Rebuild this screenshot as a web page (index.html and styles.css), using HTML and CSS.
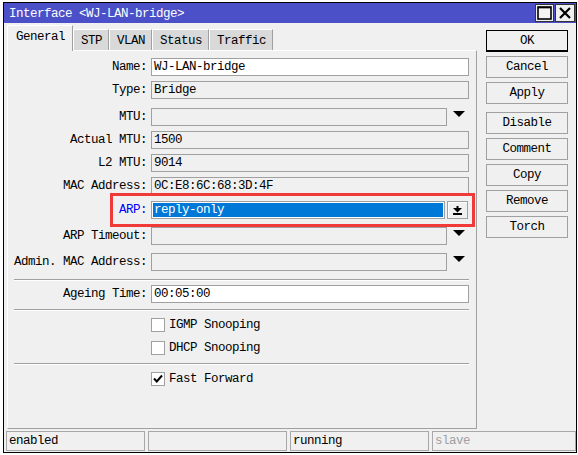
FILE: index.html
```html
<!DOCTYPE html>
<html>
<head>
<meta charset="utf-8">
<link rel="stylesheet" href="styles.css">
</head>
<body>
<div class="win">
  <div class="titlebar">
    <span class="title">Interface &lt;WJ-LAN-bridge&gt;</span>
    <div class="tbtns">
      <span class="tbtn max"><svg width="15" height="14" viewBox="0 0 15 14"><rect x="1" y="1" width="13" height="12" fill="#f4f4f4" stroke="#000" stroke-width="1.6"/><line x1="1" y1="1.6" x2="14" y2="1.6" stroke="#000" stroke-width="1.5"/></svg></span>
      <span class="tbtn close"><svg width="14" height="14" viewBox="0 0 14 14"><path d="M2 2 L12 12 M12 2 L2 12" stroke="#000" stroke-width="2.2" fill="none"/></svg></span>
    </div>
  </div>
  <div class="main">
    <div class="left">
      <div class="tabs">
        <div class="tab sel">General</div>
        <div class="tab">STP</div>
        <div class="tab">VLAN</div>
        <div class="tab">Status</div>
        <div class="tab">Traffic</div>
      </div>
      <div class="panel">
        <div class="row"><div class="lbl">Name:</div><div class="fld edit">WJ-LAN-bridge</div></div>
        <div class="row m5"><div class="lbl">Type:</div><div class="fld">Bridge</div></div>
        <div class="row m9"><div class="lbl">MTU:</div><div class="fld dd"></div><span class="arrow"><svg width="12" height="6" viewBox="0 0 12 6"><polygon points="0,0 12,0 6,6" fill="#000"/></svg></span></div>
        <div class="row m5"><div class="lbl">Actual MTU:</div><div class="fld">1500</div></div>
        <div class="row m5"><div class="lbl">L2 MTU:</div><div class="fld">9014</div></div>
        <div class="row m5"><div class="lbl">MAC Address:</div><div class="fld">0C:E8:6C:68:3D:4F</div></div>
        <div class="row m6"><div class="lbl blue">ARP:</div><div class="fld dd sel-fld"><span class="selval">reply-only</span></div><span class="ddbtn"><svg width="9" height="9" viewBox="0 0 9 9"><rect x="3.5" y="0" width="2" height="2" fill="#000"/><polygon points="0,2 9,2 4.5,6.5" fill="#000"/><rect x="0" y="7" width="9" height="2" fill="#000"/></svg></span></div>
        <div class="row m8"><div class="lbl">ARP Timeout:</div><div class="fld dd"></div><span class="arrow"><svg width="12" height="6" viewBox="0 0 12 6"><polygon points="0,0 12,0 6,6" fill="#000"/></svg></span></div>
        <div class="row m8"><div class="lbl">Admin. MAC Address:</div><div class="fld dd"></div><span class="arrow"><svg width="12" height="6" viewBox="0 0 12 6"><polygon points="0,0 12,0 6,6" fill="#000"/></svg></span></div>
        <div class="sep m8"></div>
        <div class="row m4"><div class="lbl">Ageing Time:</div><div class="fld edit">00:05:00</div></div>
        <div class="sep m6"></div>
        <div class="check m7"><span class="box"></span><span class="ctext">IGMP Snooping</span></div>
        <div class="check m9"><span class="box"></span><span class="ctext">DHCP Snooping</span></div>
        <div class="sep m8"></div>
        <div class="check m7"><span class="box"><svg width="12" height="12" viewBox="0 0 12 12"><path d="M2 5.5 L4.8 8.5 L10 2.5" stroke="#000" stroke-width="2" fill="none"/></svg></span><span class="ctext">Fast Forward</span></div>
        <div class="redbox"></div>
      </div>
    </div>
    <div class="buttons">
      <div class="btn ok">OK</div>
      <div class="btn">Cancel</div>
      <div class="btn">Apply</div>
      <div class="btn m4">Disable</div>
      <div class="btn">Comment</div>
      <div class="btn">Copy</div>
      <div class="btn">Remove</div>
      <div class="btn">Torch</div>
    </div>
  </div>
  <div class="status">
    <div class="sbox">enabled</div>
    <div class="sbox"></div>
    <div class="sbox">running</div>
    <div class="sbox last dim">slave</div>
  </div>
</div>
</body>
</html>
```

FILE: styles.css
```css
html, body {
  margin: 0;
  padding: 0;
}
body {
  background: #ffffff;
  font-family: "Liberation Mono", "DejaVu Sans Mono", monospace;
  font-size: 12.5px;
  letter-spacing: -0.5px;
  color: #000;
  width: 578px;
  height: 455px;
  overflow: hidden;
}
.win {
  margin: 2px 0 0 3px;
  width: 572px;
  height: 449px;
  border: 1px solid #000;
  background: #f0f0f0;
  display: flex;
  flex-direction: column;
}
.titlebar {
  height: 20px;
  flex: none;
  background: #4b50c8;
  color: #fff;
  display: flex;
  align-items: center;
  padding-left: 5px;
}
.title {
  padding-top: 2px;
}
.tbtns {
  margin-left: auto;
  margin-right: 1px;
  display: flex;
  gap: 1px;
}
.tbtn {
  box-sizing: border-box;
  height: 18px;
  border: 1px solid #333;
  background: #f0f0f0;
  display: flex;
  align-items: center;
  justify-content: center;
}
.tbtn.max { width: 19px; }
.tbtn.close { width: 20px; }

.main {
  flex: 1;
  display: flex;
}
.left {
  margin-left: 3px;
  padding-top: 2px;
  width: 470px;
  display: flex;
  flex-direction: column;
}
.tabs {
  height: 25px;
  display: flex;
  align-items: flex-end;
  position: relative;
  z-index: 1;
}
.tab {
  box-sizing: border-box;
  height: 21px;
  padding: 0 6px 0 7px;
  background: #d9d9d9;
  border-left: 1px solid #fff;
  border-right: 1px solid #a0a0a0;
  border-top: 1px solid #fff;
  display: flex;
  align-items: center;
  padding-top: 2px;
}
.tab.sel {
  height: 26px;
  margin-bottom: -1px;
  padding: 0 7px 4px 8px;
  background: #f0f0f0;
}
.panel {
  box-sizing: border-box;
  height: 379px;
  border: 1px solid;
  border-color: #fff #a0a0a0 #a0a0a0 #fff;
  padding-top: 7px;
  position: relative;
  display: flex;
  flex-direction: column;
}
.row {
  display: flex;
  align-items: flex-start;
  height: 18px;
}
.lbl {
  width: 139px;
  margin-right: 4px;
  text-align: right;
  line-height: 18px;
  white-space: nowrap;
}
.lbl.blue { color: #0000ff; }
.fld {
  box-sizing: border-box;
  width: 318px;
  height: 18px;
  border: 1px solid #a0a0a0;
  background: #f0f0f0;
  padding: 0 2px;
  line-height: 16px;
  white-space: nowrap;
}
.fld.edit { background: #fff; }
.fld.dd { width: 296px; }
.fld.sel-fld {
  width: 294px;
  background: #fff;
  padding: 1px;
  display: flex;
}
.selval {
  flex: 1;
  background: #0078d7;
  color: #fff;
  line-height: 14px;
  padding-left: 1px;
}
.arrow {
  margin-left: 6px;
  margin-top: 3px;
  display: flex;
}
.ddbtn {
  box-sizing: border-box;
  margin-left: 2px;
  width: 21px;
  height: 18px;
  border: 1px solid #a0a0a0;
  box-shadow: inset 1px 1px 0 #fff;
  background: #f0f0f0;
  display: flex;
  align-items: center;
  justify-content: center;
}
.sep {
  margin-left: 6px;
  width: 455px;
  height: 0;
  border-top: 1px solid #a0a0a0;
  border-bottom: 1px solid #fff;
}
.check {
  margin-left: 143px;
  height: 14px;
  display: flex;
  align-items: center;
}
.box {
  box-sizing: border-box;
  width: 14px;
  height: 14px;
  border: 1px solid #a0a0a0;
  background: #fff;
  display: flex;
  align-items: center;
  justify-content: center;
}
.ctext {
  margin-left: 4px;
}
.m4 { margin-top: 4px; }
.m5 { margin-top: 5px; }
.m6 { margin-top: 6px; }
.m7 { margin-top: 7px; }
.m8 { margin-top: 8px; }
.m9 { margin-top: 9px; }

.redbox {
  position: absolute;
  left: 102px;
  top: 142px;
  width: 359px;
  height: 28px;
  border: 3px solid #f03a3a;
}

.buttons {
  margin-left: 9px;
  padding-top: 7px;
  width: 82px;
  display: flex;
  flex-direction: column;
  gap: 4px;
}
.btn {
  box-sizing: border-box;
  height: 22px;
  border: 1px solid #a0a0a0;
  background: #f0f0f0;
  display: flex;
  align-items: center;
  justify-content: center;
}
.btn.ok {
  border-color: #000;
  border-bottom-width: 2px;
}

.status {
  flex: none;
  height: 20px;
  margin-bottom: 1px;
  padding-left: 2px;
  display: flex;
  gap: 3px;
}
.sbox {
  box-sizing: border-box;
  width: 139px;
  height: 20px;
  border: 1px solid #a8a8a8;
  padding-left: 2px;
  line-height: 18px;
}
.sbox.last { width: 144px; }
.sbox.dim { color: #a0a0a0; }
```
